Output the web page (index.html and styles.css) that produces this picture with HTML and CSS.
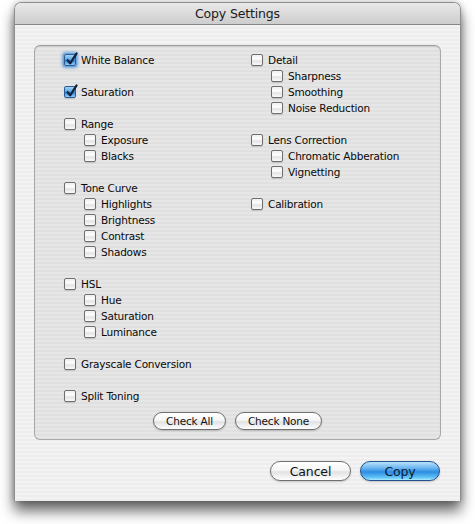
FILE: index.html
```html
<!DOCTYPE html>
<html>
<head>
<meta charset="utf-8">
<link rel="stylesheet" href="styles.css">
</head>
<body>
<div class="window">
  <div class="titlebar">Copy Settings</div>
  <div class="content">
    <div class="group">
      <div class="cols">
        <div class="col col-left">
          <div class="row"><span class="cb checked focus"><svg viewBox="0 0 12 12"><path d="M2.6 6.2 L5.2 9.4 L11.6 -0.6" /></svg></span><span>White Balance</span></div>
          <div class="gap"></div>
          <div class="row"><span class="cb checked"><svg viewBox="0 0 12 12"><path d="M2.6 6.2 L5.2 9.4 L11.6 -0.6" /></svg></span><span>Saturation</span></div>
          <div class="gap"></div>
          <div class="row"><span class="cb"></span><span>Range</span></div>
          <div class="row sub"><span class="cb"></span><span>Exposure</span></div>
          <div class="row sub"><span class="cb"></span><span>Blacks</span></div>
          <div class="gap"></div>
          <div class="row"><span class="cb"></span><span>Tone Curve</span></div>
          <div class="row sub"><span class="cb"></span><span>Highlights</span></div>
          <div class="row sub"><span class="cb"></span><span>Brightness</span></div>
          <div class="row sub"><span class="cb"></span><span>Contrast</span></div>
          <div class="row sub"><span class="cb"></span><span>Shadows</span></div>
          <div class="gap"></div>
          <div class="row"><span class="cb"></span><span>HSL</span></div>
          <div class="row sub"><span class="cb"></span><span>Hue</span></div>
          <div class="row sub"><span class="cb"></span><span>Saturation</span></div>
          <div class="row sub"><span class="cb"></span><span>Luminance</span></div>
          <div class="gap"></div>
          <div class="row"><span class="cb"></span><span>Grayscale Conversion</span></div>
          <div class="gap"></div>
          <div class="row"><span class="cb"></span><span>Split Toning</span></div>
        </div>
        <div class="col col-right">
          <div class="row"><span class="cb"></span><span>Detail</span></div>
          <div class="row sub"><span class="cb"></span><span>Sharpness</span></div>
          <div class="row sub"><span class="cb"></span><span>Smoothing</span></div>
          <div class="row sub"><span class="cb"></span><span>Noise Reduction</span></div>
          <div class="gap"></div>
          <div class="row"><span class="cb"></span><span>Lens Correction</span></div>
          <div class="row sub"><span class="cb"></span><span>Chromatic Abberation</span></div>
          <div class="row sub"><span class="cb"></span><span>Vignetting</span></div>
          <div class="gap"></div>
          <div class="row"><span class="cb"></span><span>Calibration</span></div>
        </div>
      </div>
      <div class="group-buttons">
        <span class="btn small btn-all">Check All</span>
        <span class="btn small btn-none">Check None</span>
      </div>
    </div>
    <div class="dialog-buttons">
      <span class="btn big btn-cancel">Cancel</span>
      <span class="btn big primary btn-copy">Copy</span>
    </div>
  </div>
</div>
</body>
</html>
```

FILE: styles.css
```css
* { box-sizing: border-box; }
html, body { margin: 0; padding: 0; background: #ffffff; }
body {
  width: 475px;
  height: 524px;
  overflow: hidden;
  font-family: "DejaVu Sans", "Liberation Sans", sans-serif;
  color: #000;
}
.window {
  margin: 2px 0 0 14px;
  width: 447px;
  height: 499px;
  border: 1px solid #8e8e8e;
  border-bottom: none;
  border-radius: 7px 7px 0 0;
  background: repeating-linear-gradient(to bottom, #ededed 0 2px, #f3f3f3 2px 4px);
  box-shadow: 0 10px 14px rgba(0,0,0,0.6), 0 0 6px rgba(0,0,0,0.25);
  overflow: hidden;
}
.titlebar {
  height: 22px;
  border-bottom: 1px solid #858585;
  background: linear-gradient(to bottom, #e9e9e9 0%, #dbdbdb 50%, #cdcdcd 100%);
  text-align: center;
  font-size: 12.5px;
  letter-spacing: -0.15px;
  line-height: 22px;
  color: #1a1a1a;
}
.content {
  padding: 20px 19px 0 19px;
}
.group {
  width: 407px;
  height: 395px;
  border: 1px solid #a9a9a9;
  border-top-color: #9a9a9a;
  border-radius: 6px;
  background: repeating-linear-gradient(to bottom, #e0e0e0 0 2px, #e6e6e6 2px 4px);
  padding: 6px 0 0 29px;
  box-shadow: inset 0 1px 1px rgba(0,0,0,0.08);
}
.cols {
  display: flex;
}
.col-left { width: 187px; }
.row {
  height: 16px;
  display: flex;
  align-items: center;
  gap: 5px;
  font-size: 10.5px;
  letter-spacing: -0.2px;
  color: #0a0a0a;
  white-space: nowrap;
}
.row.sub { padding-left: 20px; }
.gap { height: 16px; }
.cb {
  position: relative;
  flex: none;
  width: 12px;
  height: 12px;
  border: 1px solid #6e6e6e;
  border-radius: 2px;
  background: linear-gradient(to bottom, #f0f0f0 0%, #fdfdfd 40%, #e4e4e4 60%, #fbfbfb 100%);
  box-shadow: 0 1px 1px rgba(0,0,0,0.15);
}
.cb.checked {
  border-color: #2c5c94;
  background: linear-gradient(to bottom, #a7d3f6 0%, #5aa6e6 45%, #2e82d4 55%, #8fd0fa 100%);
}
.cb.focus {
  box-shadow: 0 0 0 1px #6aa6e0, 0 0 3px 2px rgba(70,140,220,0.75);
}
.cb svg {
  position: absolute;
  left: 0;
  top: -1px;
  width: 12px;
  height: 12px;
  overflow: visible;
}
.cb svg path {
  fill: none;
  stroke: #15213a;
  stroke-width: 2.2;
  stroke-linecap: round;
  stroke-linejoin: round;
}
.group-buttons {
  display: flex;
  justify-content: center;
  gap: 9px;
  margin: 8px 0 0 -29px;
}
.btn {
  display: flex;
  align-items: center;
  justify-content: center;
  border: 1px solid #6f6f6f;
  border-radius: 11px;
  background: linear-gradient(to bottom, #ffffff 0%, #f6f6f6 45%, #e2e2e2 55%, #f4f4f4 85%, #ffffff 100%);
  box-shadow: 0 1px 2px rgba(0,0,0,0.2);
  color: #111;
  white-space: nowrap;
}
.btn.small {
  height: 18px;
  font-size: 10.5px;
  letter-spacing: -0.2px;
  border-radius: 9px;
}
.btn-all { width: 73px; }
.btn-none { width: 87px; }
.dialog-buttons {
  display: flex;
  justify-content: flex-end;
  gap: 9px;
  margin-top: 21px;
  padding-right: 1px;
}
.btn.big {
  height: 20px;
  font-size: 12.5px;
  letter-spacing: -0.15px;
  border-radius: 10px;
}
.btn-cancel { width: 81px; }
.btn-copy { width: 80px; }
.btn.primary {
  border-color: #23518d;
  background: linear-gradient(to bottom, #b9e1fb 0%, #73bbf0 30%, #3d98e4 50%, #2b8ce2 55%, #5fc0f5 85%, #a8ecff 100%);
  color: #0b1a33;
}
```
